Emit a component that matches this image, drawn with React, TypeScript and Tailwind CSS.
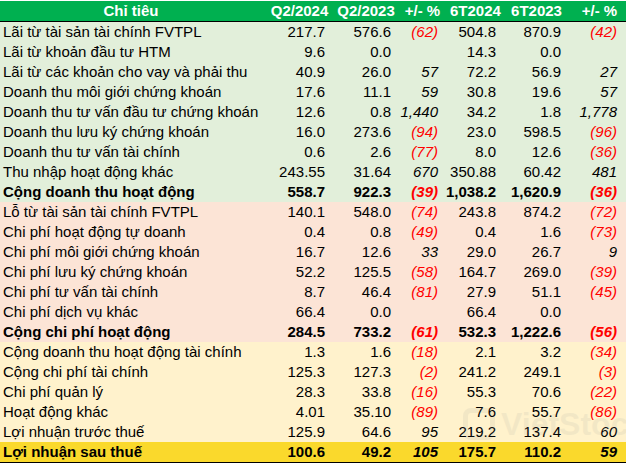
import React from 'react';

type Row = {
  label: string;
  cells: string[];
  bold?: boolean;
  tone: 'green' | 'pink' | 'cream' | 'gold';
};

const rows: Row[] = [
  { label: 'Lãi từ tài sản tài chính FVTPL', cells: ['217.7', '576.6', '(62)', '504.8', '870.9', '(42)'], tone: 'green' },
  { label: 'Lãi từ khoản đầu tư HTM', cells: ['9.6', '0.0', '', '14.3', '0.0', ''], tone: 'green' },
  { label: 'Lãi từ các khoản cho vay và phải thu', cells: ['40.9', '26.0', '57', '72.2', '56.9', '27'], tone: 'green' },
  { label: 'Doanh thu môi giới chứng khoán', cells: ['17.6', '11.1', '59', '30.8', '19.6', '57'], tone: 'green' },
  { label: 'Doanh thu tư vấn đầu tư chứng khoán', cells: ['12.6', '0.8', '1,440', '34.2', '1.8', '1,778'], tone: 'green' },
  { label: 'Doanh thu lưu ký chứng khoán', cells: ['16.0', '273.6', '(94)', '23.0', '598.5', '(96)'], tone: 'green' },
  { label: 'Doanh thu tư vấn tài chính', cells: ['0.6', '2.6', '(77)', '8.0', '12.6', '(36)'], tone: 'green' },
  { label: 'Thu nhập hoạt động khác', cells: ['243.55', '31.64', '670', '350.88', '60.42', '481'], tone: 'green' },
  { label: 'Cộng doanh thu hoạt động', cells: ['558.7', '922.3', '(39)', '1,038.2', '1,620.9', '(36)'], tone: 'green', bold: true },
  { label: 'Lỗ từ tài sản tài chính FVTPL', cells: ['140.1', '548.0', '(74)', '243.8', '874.2', '(72)'], tone: 'pink' },
  { label: 'Chi phí hoạt động tự doanh', cells: ['0.4', '0.8', '(49)', '0.4', '1.6', '(73)'], tone: 'pink' },
  { label: 'Chi phí môi giới chứng khoán', cells: ['16.7', '12.6', '33', '29.0', '26.7', '9'], tone: 'pink' },
  { label: 'Chi phí lưu ký chứng khoán', cells: ['52.2', '125.5', '(58)', '164.7', '269.0', '(39)'], tone: 'pink' },
  { label: 'Chi phí tư vấn tài chính', cells: ['8.7', '46.4', '(81)', '27.9', '51.1', '(45)'], tone: 'pink' },
  { label: 'Chi phí dịch vụ khác', cells: ['66.4', '0.0', '', '66.4', '0.0', ''], tone: 'pink' },
  { label: 'Cộng chi phí hoạt động', cells: ['284.5', '733.2', '(61)', '532.3', '1,222.6', '(56)'], tone: 'pink', bold: true },
  { label: 'Cộng doanh thu hoạt động tài chính', cells: ['1.3', '1.6', '(18)', '2.1', '3.2', '(34)'], tone: 'cream' },
  { label: 'Cộng chi phí tài chính', cells: ['125.3', '127.3', '(2)', '241.2', '249.1', '(3)'], tone: 'cream' },
  { label: 'Chi phí quản lý', cells: ['28.3', '33.8', '(16)', '55.3', '70.6', '(22)'], tone: 'cream' },
  { label: 'Hoạt động khác', cells: ['4.01', '35.10', '(89)', '7.6', '55.7', '(86)'], tone: 'cream' },
  { label: 'Lợi nhuận trước thuế', cells: ['125.9', '64.6', '95', '219.2', '137.4', '60'], tone: 'cream' },
  { label: 'Lợi nhuận sau thuế', cells: ['100.6', '49.2', '105', '175.7', '110.2', '59'], tone: 'gold', bold: true },
];

const toneBg: Record<Row['tone'], string> = {
  green: 'bg-[#e2efda]',
  pink: 'bg-[#fce4d6]',
  cream: 'bg-[#fff2cc]',
  gold: 'bg-[#fad92c]',
};

const headers = ['Q2/2024', 'Q2/2023', '+/- %', '6T2024', '6T2023', '+/- %'];
const cellPad = ['pr-[4px]', 'pr-[4px]', 'pr-[4px]', 'pr-[4px]', 'pr-[4px]', 'pr-[9px]'];
const grid = 'grid grid-cols-[262px_67px_66px_47px_58px_65px_61px]';

const App: React.FC = () => {
  return (
    <div className="relative w-[626px] h-[465px] bg-white font-['Liberation_Sans',Arial,sans-serif] text-[15px] text-black overflow-hidden">
      {/* header */}
      <div className={`${grid} mt-px h-[20px] leading-[20px] bg-[#00b050] text-white font-bold border-b border-black box-content`}>
        <div className="text-center">Chỉ tiêu</div>
        {headers.map((h, i) => (
          <div key={i} className="text-center pl-[8px] whitespace-nowrap">{h}</div>
        ))}
      </div>

      {/* body */}
      <div className="flex flex-col">
        {rows.map((r, i) => (
          <div
            key={i}
            className={`${grid} h-[20px] leading-[20px] ${toneBg[r.tone]} ${r.bold ? 'font-bold' : ''} ${
              r.tone === 'gold' ? 'border-b border-black box-content' : ''
            }`}
          >
            <div className="pl-[3px] whitespace-nowrap">{r.label}</div>
            {r.cells.map((c, j) => {
              const pct = j === 2 || j === 5;
              const neg = c.startsWith('(');
              return (
                <div
                  key={j}
                  className={`text-right whitespace-nowrap ${cellPad[j]} ${pct ? 'italic' : ''} ${
                    neg ? 'text-[#ff0000]' : ''
                  }`}
                >
                  {c}
                </div>
              );
            })}
          </div>
        ))}
      </div>

      {/* watermark */}
      <div className="absolute left-[463px] top-[408px] flex items-center gap-[6px] opacity-[0.08] pointer-events-none">
        <div className="w-[32px] h-[32px] rounded-[8px] border-[5px] border-gray-500" />
        <span className="text-[32px] font-bold text-gray-500 leading-none">VietStock</span>
      </div>
    </div>
  );
};

export default App;
